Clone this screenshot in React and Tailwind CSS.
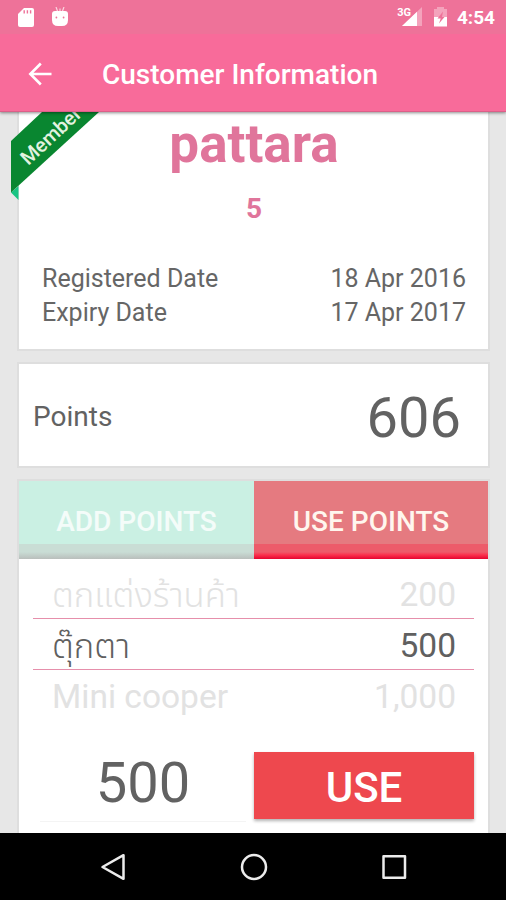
import React, { useState } from "react";

const REWARDS = [
  { name: "ตกแต่งร้านค้า", points: "200", thai: true },
  { name: "ตุ๊กตา", points: "500", thai: true },
  { name: "Mini cooper", points: "1,000" },
];

function StatusBar() {
  return (
    <div className="h-[34px] bg-[#ee7299] flex items-center justify-between pl-[17px] pr-[11px] text-white">
      <div className="flex items-center gap-[16px]">
        {/* SD CARD */}
        <svg className="w-[18px] h-[21px]" viewBox="0 0 18 21" fill="none">
          <path d="M7 1h8q2 0 2 2v15q0 2-2 2H3q-2 0-2-2V7z" fill="white" />
          <path d="M7.2 3.2v3.3M10.4 3.2v3.3M13.6 3.2v3.3" stroke="#ee7299" strokeWidth="1.4" />
        </svg>
        {/* DEBUG HEAD */}
        <svg className="w-[18px] h-[21px]" viewBox="0 0 18 21" fill="none">
          <path d="M5 0l1.500 4M13 0l-1.500 4M9 1.500V4" stroke="white" strokeOpacity="0.7" strokeWidth="1.2" />
          <path d="M1 7q0-3 3-3h10q3 0 3 3v6q0 6-6 6H7q-6 0-6-6z" fill="white" />
          <circle cx="5.400" cy="10.500" r="0.900" fill="#ee7299" />
          <circle cx="12.600" cy="10.500" r="0.900" fill="#ee7299" />
        </svg>
      </div>
      <div className="flex items-center">
        <span className="text-[11px] leading-[10px] font-bold -mt-[9px] -mr-[9px]">3G</span>
        <svg className="w-[20px] h-[20px] mr-[11px]" viewBox="0 0 20 20">
          <path d="M20 0v19H0z" fill="white" fillOpacity="0.35" />
          <path d="M15 4.7V19H0z" fill="white" />
        </svg>
        <svg className="w-[15px] h-[20px] mr-[9px]" viewBox="0 0 15 20">
          <path d="M4 0h7v2h3v8H1V2h3z" fill="white" fillOpacity="0.35" />
          <path d="M1 10h13v9.500H1z" fill="white" />
          <path d="M10 4.500L4.500 11.500h3.200L6 16.500L11.500 10H9z" fill="#ee7299" />
        </svg>
        <span className="text-[19px] leading-[20px] pt-[2px] font-bold">4:54</span>
      </div>
    </div>
  );
}

function Ribbon() {
  return (
    <div className="absolute -left-[8px] top-0 w-[90px] h-[90px]">
      <svg className="absolute inset-0" width="90" height="90" viewBox="0 0 90 90">
        <path d="M0 80.500L7.500 88V74z" fill="#18c483" />
        <path d="M31 0H88L0 80.500V29z" fill="#098630" />
      </svg>
      <span className="absolute left-[20px] top-[35px] text-[20px] leading-[22px] font-medium text-[#e3f3e0] origin-bottom-left -rotate-[43deg]">
        Member
      </span>
    </div>
  );
}

function InfoRow({ label, value }) {
  return (
    <div className="flex justify-between text-[25px] leading-[34px] text-[#666666]">
      <span>{label}</span>
      <span>{value}</span>
    </div>
  );
}

function NavBar() {
  return (
    <div className="h-[67px] shrink-0 bg-black flex items-center justify-between pl-[99px] pr-[98px]">
      <svg className="w-[28px] h-[28px]" viewBox="0 0 28 28" fill="none" stroke="#ececec" strokeWidth="2.500" strokeLinejoin="round">
        <path d="M24.500 2.200v23.600L3.500 14z" />
      </svg>
      <svg className="w-[28px] h-[28px]" viewBox="0 0 28 28" fill="none" stroke="#ececec" strokeWidth="2.500">
        <circle cx="14" cy="14" r="12" />
      </svg>
      <svg className="w-[28px] h-[28px]" viewBox="0 0 28 28" fill="none" stroke="#ececec" strokeWidth="2.500" strokeLinejoin="round">
        <rect x="3.500" y="3.300" width="21.500" height="21.500" />
      </svg>
    </div>
  );
}

export default function App() {
  const [selected, setSelected] = useState(1);

  return (
    <div className="w-[506px] h-[900px] overflow-hidden flex flex-col bg-[#e7e7e7] font-[Roboto,'Noto_Sans_Thai',sans-serif]">
      {/* HEADER */}
      <header className="relative z-10 shrink-0 shadow-[0_1px_3px_rgba(0,0,0,0.45)]">
        <StatusBar />
        <div className="h-[78px] bg-[#f86b9a] border-b border-[#dc5f88] flex items-center pl-[28px] pt-[2px]">
          <svg className="w-[24px] h-[24px]" viewBox="0 0 24 24" fill="none" stroke="white" strokeWidth="2.600">
            <path d="M23.500 12H2.500M12.800 1.500L2.300 12l10.500 10.500" />
          </svg>
          <h1 className="ml-[50px] pt-[2px] text-[28px] leading-[32px] font-medium text-white whitespace-nowrap">Customer Information</h1>
        </div>
      </header>

      <main className="flex-1 min-h-0 overflow-hidden flex flex-col pl-[19px] pr-[18px]">
        {/* CUSTOMER CARD */}
        <section className="relative shrink-0 h-[237px] bg-white shadow-[0_0_0_2px_#dedede] pl-[23px] pr-[22px]">
          <Ribbon />
          <h2 className="pt-[2px] text-[53px] leading-[60px] font-bold text-[#e0759b] text-center">pattara</h2>
          <p className="mt-[18px] text-[28px] leading-[34px] font-bold text-[#e0759b] text-center">5</p>
          <div className="mt-[35px] pt-px">
            <InfoRow label="Registered Date" value="18 Apr 2016" />
            <InfoRow label="Expiry Date" value="17 Apr 2017" />
          </div>
        </section>

        {/* POINTS BALANCE */}
        <section className="mt-[15px] pt-[4px] shrink-0 h-[102px] bg-white shadow-[0_0_0_2px_#dedede] flex items-center justify-between pl-[14px] pr-[27px] text-[#626262]">
          <span className="text-[28px]">Points</span>
          <span className="text-[56px] leading-[80px] pt-[2px]">606</span>
        </section>

        {/* ADD / USE POINTS */}
        <section className="mt-[15px] shrink-0 h-[360px] bg-white shadow-[0_0_0_2px_#dedede]">
          <div className="flex h-[78px] text-[28px] font-medium">
            <button className="w-[235px] pt-[4px] text-white/80 bg-[linear-gradient(to_bottom,#caf0e3_0_63px,#c9ddd5_63px_71px,#b9bebc_78px)]">ADD POINTS</button>
            <button className="flex-1 pt-[4px] text-[#fff6ee] bg-[linear-gradient(to_bottom,#e57a80_0_63px,#ed5b6a_63px_71px,#fb2f4c_74px,#e4052f_78px)]">USE POINTS</button>
          </div>

          <ul className="mt-[9px] px-[14px] text-[33.500px] leading-[54px]">
            {REWARDS.map((reward, i) => (
              <li
                key={reward.name}
                onClick={() => setSelected(i)}
                className={`h-[51px] border-b ${i < 2 ? "border-[#e68fab]" : "border-transparent"}`}
              >
                <div className={`flex justify-between pl-[19px] pr-[18px] ${i === selected ? "text-[#606060]" : "text-[#e2e2e2]"}`}>
                  <span className={reward.thai ? "text-[34.700px] font-light" : ""}>{reward.name}</span>
                  <span>{reward.points}</span>
                </div>
              </li>
            ))}
          </ul>

          <div className="mt-[31px] flex">
            <div className="w-[206px] ml-[21px] h-[70px] border-b border-[#f4f4f4] text-center text-[56px] leading-[62px] text-[#626262]">500</div>
            <button className="ml-[8px] w-[220px] h-[67px] bg-[#ee484e] text-white text-[42px] leading-[67px] font-medium pt-[2px] shadow-[0_2px_3px_rgba(0,0,0,0.3)]">
              USE
            </button>
          </div>
        </section>
      </main>

      <NavBar />
    </div>
  );
}
